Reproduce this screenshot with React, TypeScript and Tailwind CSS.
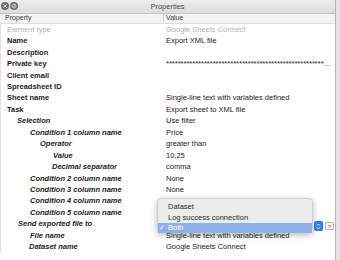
import React from 'react'

type Row = { label: string; value?: string; indent: string; italic?: boolean; muted?: boolean; mask?: boolean }

// indent classes written out so Tailwind picks them up
const rows: Row[] = [
  { label: 'Element type', value: 'Google Sheets Connect', indent: 'pl-[6px]', muted: true },
  { label: 'Name', value: 'Export XML file', indent: 'pl-[6px]' },
  { label: 'Description', indent: 'pl-[6px]' },
  { label: 'Private key', indent: 'pl-[6px]', mask: true },
  { label: 'Client email', indent: 'pl-[6px]' },
  { label: 'Spreadsheet ID', indent: 'pl-[6px]' },
  { label: 'Sheet name', value: 'Single-line text with variables defined', indent: 'pl-[6px]' },
  { label: 'Task', value: 'Export sheet to XML file', indent: 'pl-[6px]' },
  { label: 'Selection', value: 'Use filter', indent: 'pl-[16px]', italic: true },
  { label: 'Condition 1 column name', value: 'Price', indent: 'pl-[29px]', italic: true },
  { label: 'Operator', value: 'greater than', indent: 'pl-[39px]', italic: true },
  { label: 'Value', value: '10,25', indent: 'pl-[52px]', italic: true },
  { label: 'Decimal separator', value: 'comma', indent: 'pl-[51px]', italic: true },
  { label: 'Condition 2 column name', value: 'None', indent: 'pl-[29px]', italic: true },
  { label: 'Condition 3 column name', value: 'None', indent: 'pl-[29px]', italic: true },
  // values of these two sit under the open popup
  { label: 'Condition 4 column name', indent: 'pl-[29px]', italic: true },
  { label: 'Condition 5 column name', indent: 'pl-[29px]', italic: true },
  { label: 'Send exported file to', indent: 'pl-[17px]', italic: true },
  { label: 'File name', value: 'Single-line text with variables defined', indent: 'pl-[29px]', italic: true },
  { label: 'Dataset name', value: 'Google Sheets Connect', indent: 'pl-[28px]', italic: true },
]

function WinButton({ kind }: { kind: 'close' | 'min' }) {
  return (
    <svg width="8" height="8" viewBox="0 0 8 8">
      <circle cx="4" cy="4" r="4" fill="#6f6f6f" />
      {kind === 'close' ? (
        <path d="M2.5 2.5 L5.5 5.5 M5.5 2.5 L2.5 5.5" stroke="#d8d8d8" strokeWidth="1" strokeLinecap="round" />
      ) : (
        <>
          <circle cx="4" cy="4" r="2" fill="none" stroke="#d8d8d8" strokeWidth="0.9" />
          <path d="M2.6 5.4 L5.4 2.6" stroke="#d8d8d8" strokeWidth="0.9" />
        </>
      )}
    </svg>
  )
}

export default function App() {
  return (
    <div className="relative w-[340px] h-[260px] overflow-hidden bg-[#e4e4e4] font-['Liberation_Sans',Arial,sans-serif] text-[#1c1c1c]">
      <div className="w-[336px] h-full flex flex-col bg-white border-r border-[#b4b4b4]">
        {/* Title bar */}
        <div className="relative h-[14px] shrink-0 flex items-center bg-gradient-to-b from-[#eeeeee] to-[#dcdcdc] border-b border-[#c6c6c6]">
          <div className="absolute left-[1px] top-[2px] flex gap-[1px]">
            <WinButton kind="close" />
            <WinButton kind="min" />
          </div>
          <div className="flex-1 text-center text-[7.5px] text-[#4a4a4a]">Properties</div>
        </div>

        {/* Column header */}
        <div className="h-[9.6px] shrink-0 flex items-center bg-[#f3f3f3] border-b border-[#dedede] text-[7px] text-[#3a3a3a]">
          <div className="w-[164px] pl-[5px] border-r border-[#d0d0d0] leading-[8px]">Property</div>
          <div className="pl-[2px] leading-[8px]">Value</div>
        </div>

        {/* Rows */}
        <div className="flex flex-col border-l border-[#e2e2e2]">
          {rows.map((r) => (
            <div key={r.label} className="h-[11.45px] flex items-center text-[7.5px] leading-[7px]">
              <div
                className={`w-[164px] shrink-0 whitespace-nowrap ${r.indent} ${
                  r.muted ? 'text-[#b3b3b3]' : 'font-bold'
                } ${r.italic ? 'italic' : ''}`}
              >
                {r.label}
              </div>
              <div className={`pl-[1px] whitespace-nowrap ${r.muted ? 'text-[#b3b3b3]' : ''}`}>
                {r.mask ? '*'.repeat(54) + '…' : r.value}
              </div>
            </div>
          ))}
        </div>
      </div>

      {/* Open select popup */}
      <div className="absolute left-[157px] top-[198px] w-[156px] h-[35px] pt-[2.5px] rounded-[4px] bg-[#ececec] border border-[#d2d2d2] shadow-[0_2px_6px_rgba(0,0,0,0.28)] text-[7.5px] leading-[7px] text-[#2a2a2a]">
        <div className="h-[10.6px] flex items-center pl-[10px]">Dataset</div>
        <div className="h-[10.6px] flex items-center pl-[10px]">Log success connection</div>
        <div className="h-[10.6px] flex items-center bg-[#8fb0ea] text-white">
          <span className="w-[10px] pl-[1px] text-[7px]">✓</span>
          <span>Both</span>
        </div>
      </div>

      {/* select stepper + more button */}
      <div className="absolute left-[314px] top-[221px] w-[9px] h-[10px] rounded-[2px] bg-[#2f7bf5] flex items-center justify-center">
        <svg width="5" height="7" viewBox="0 0 5 7">
          <path d="M1 2.6 L2.5 1 L4 2.6 M1 4.4 L2.5 6 L4 4.4" fill="none" stroke="white" strokeWidth="0.9" />
        </svg>
      </div>
      <div className="absolute left-[325px] top-[222px] w-[9px] h-[8px] rounded-[1px] bg-[#f5f5f5] border border-[#b2b2b2] flex items-center justify-center text-[6px] leading-[6px] text-[#333]">
        &gt;
      </div>
    </div>
  )
}
